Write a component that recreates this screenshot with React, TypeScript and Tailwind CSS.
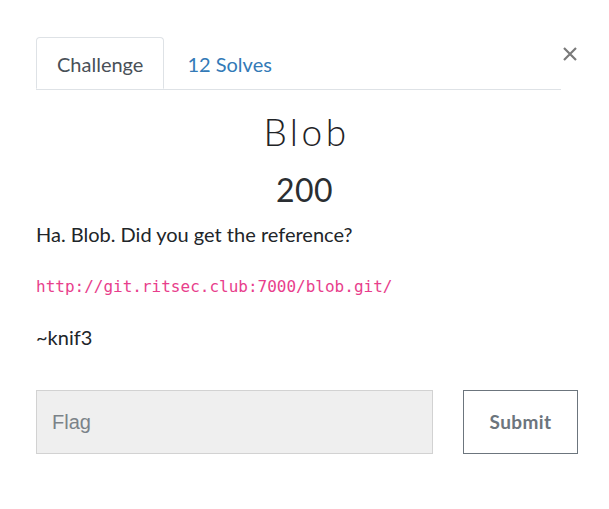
export default function App() {
  return (
    <div className="w-[609px] h-[509px] bg-white pt-[37px] px-[36px] font-['Lato',sans-serif] text-[#212529]">
      <div className="flex items-start">
        <div className="w-[525px] shrink-0 flex border-b border-[#dee2e6]">
          <div className="h-[52px] px-[20px] pt-[2px] flex items-center text-[20px] text-[#495057] border border-[#dee2e6] border-b-white rounded-t-[4px] bg-white -mb-px">
            Challenge
          </div>
          <div className="h-[52px] pl-[23px] pt-[2px] flex items-center text-[20px] text-[#337ab7]">
            12 Solves
          </div>
        </div>
        <button className="ml-[2px] mt-[10px] text-[#7a7a7a]">
          <svg width="14" height="14" viewBox="0 0 14 14">
            <path d="M1 1 L13 13 M13 1 L1 13" stroke="currentColor" strokeWidth="2.2" />
          </svg>
        </button>
      </div>

      <h2 className="mt-[20px] pl-[4px] text-center text-[37px] leading-[43px] font-light tracking-[3.5px] text-[#1f2326]">
        Blob
      </h2>
      <h3 className="mt-[18px] text-center text-[32px] leading-[38px] tracking-[0.5px] text-[#2a2e32]">200</h3>

      <p className="mt-[10px] mb-[20px] text-[20px] leading-[30px]">Ha. Blob. Did you get the reference?</p>
      <p className="mb-[20px] text-[20px] leading-[30px]">
        <code className="text-[16px] text-[#e83e8c] font-['DejaVu_Sans_Mono',monospace]">
          http://git.ritsec.club:7000/blob.git/
        </code>
      </p>
      <p className="mb-[20px] text-[20px] leading-[30px]">~knif3</p>

      <div className="mt-[38px] flex">
        <input
          placeholder="Flag"
          className="w-[397px] shrink-0 h-[64px] bg-[#efefef] border border-[#d2d2d2] px-[15px] text-[20px] font-['Liberation_Sans',sans-serif] placeholder:text-[#7b8288] outline-none"
        />
        <button className="ml-[30px] shrink-0 w-[115px] h-[64px] border border-[#6c757d] text-[#6c757d] font-bold text-[19px] tracking-[0.4px]">
          Submit
        </button>
      </div>
    </div>
  )
}
